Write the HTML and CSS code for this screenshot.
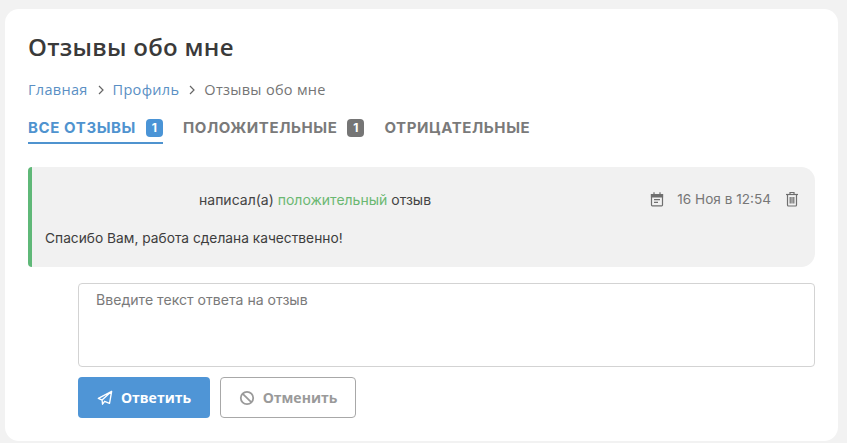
FILE: index.html
```html
<!DOCTYPE html>
<html lang="en">
<head>
  <meta charset="UTF-8" />
  <title>Отзывы обо мне</title>
  <link rel="stylesheet" href="styles.css">
</head>
<body>
  <div class="card">
    <h1 class="title">Отзывы обо мне</h1>

    <div class="crumbs">
      <a href="#">Главная</a>
      <svg class="crumb-arrow" viewBox="0 0 8 10"><path d="M2 1l4 4-4 4" /></svg>
      <a href="#">Профиль</a>
      <svg class="crumb-arrow" viewBox="0 0 8 10"><path d="M2 1l4 4-4 4" /></svg>
      <span>Отзывы обо мне</span>
    </div>

    <div class="tabs">
      <a class="tab active" href="#">ВСЕ ОТЗЫВЫ <span class="count">1</span></a>
      <a class="tab" href="#">ПОЛОЖИТЕЛЬНЫЕ <span class="count">1</span></a>
      <a class="tab" href="#">ОТРИЦАТЕЛЬНЫЕ</a>
    </div>

    <div class="review">
      <div class="review-head">
        <div class="review-who">написал(а) <span class="good">положительный</span> отзыв</div>
        <div class="review-meta">
          <svg class="icon date-icon" viewBox="0 0 14 16">
            <path d="M1.5 3.5h11v10.5a.8.8 0 0 1-.8.8H2.3a.8.8 0 0 1-.8-.8z" />
            <path class="date-top" d="M1.5 3.5h11v2.5h-11z" />
            <path d="M4 1.2v3M10 1.2v3" />
            <path d="M4 8.6h6M4 11.4h4" />
          </svg>
          <span class="date">16 Ноя в 12:54</span>
          <svg class="icon trash-icon" viewBox="0 0 14 16">
            <path d="M1 3.5h12" />
            <path d="M5 3.2V1.5h4v1.7" />
            <path d="M2.5 3.5v10.6c0 .5.4.9.9.9h7.2c.5 0 .9-.4.9-.9V3.5" />
            <path d="M5.2 6v6.5M7 6v6.5M8.8 6v6.5" />
          </svg>
        </div>
      </div>
      <p class="review-text">Спасибо Вам, работа сделана качественно!</p>
    </div>

    <form class="answer">
      <textarea class="answer-input" placeholder="Введите текст ответа на отзыв"></textarea>
      <div class="answer-btns">
        <button class="btn btn-send" type="button">
          <svg class="btn-icon" viewBox="0 0 18 18"><path d="M16.5 1.5L1.5 9.5l4.2 1.8L16.5 1.5zM16.5 1.5l-2.4 13.6-5.5-2.4-2.4 3.3-.5-5.2" /></svg>
          Ответить
        </button>
        <button class="btn btn-cancel" type="button">
          <svg class="btn-icon" viewBox="0 0 18 18"><circle cx="9" cy="9" r="7" /><path d="M4 4l10 10" /></svg>
          Отменить
        </button>
      </div>
    </form>
  </div>
</body>
</html>
```

FILE: styles.css
```css
html, body {
  height: 100%;
}
body {
  margin: 0;
  padding: 9px 9px 2px 5px;
  box-sizing: border-box;
  background: #f2f2f2;
  font-family: "Inter", "Liberation Sans", sans-serif;
  color: #333;
  overflow: hidden;
}
.card {
  background: #fff;
  border-radius: 14px;
  height: 100%;
  box-sizing: border-box;
  padding: 23px 23px 0;
}
.title {
  margin: 0;
  font-family: "Open Sans", sans-serif;
  font-size: 24px;
  line-height: 30px;
  font-weight: 600;
  letter-spacing: .3px;
  color: #3a3a3a;
}
.crumbs {
  display: flex;
  align-items: center;
  margin-top: 18px;
  font-family: "Open Sans", sans-serif;
  font-size: 14.5px;
  letter-spacing: .3px;
  line-height: 20px;
  color: #757575;
}
.crumbs a {
  color: #5a8fc4;
  text-decoration: none;
}
.crumb-arrow {
  width: 8px;
  height: 10px;
  margin: 0 8px 0 9px;
  fill: none;
  stroke: #666;
  stroke-width: 1.2;
}
.tabs {
  display: flex;
  gap: 20px;
  margin-top: 16px;
}
.tab {
  display: flex;
  align-items: center;
  gap: 10px;
  height: 28px;
  padding-bottom: 5px;
  box-sizing: border-box;
  font-size: 15px;
  font-weight: 700;
  color: #7a7a7a;
  text-decoration: none;
  letter-spacing: .6px;
}
.tab.active {
  color: #4f93cf;
  border-bottom: 2px solid #4f93cf;
  padding-bottom: 3px;
}
.count {
  width: 17px;
  height: 18px;
  line-height: 18px;
  border-radius: 4px;
  background: #757575;
  color: #fff;
  font-size: 12px;
  text-align: center;
  letter-spacing: 0;
}
.active .count {
  background: #4a94d6;
}
.review {
  margin-top: 23px;
  height: 100px;
  box-sizing: border-box;
  padding: 21px 16px 0 13px;
  background: #f1f1f1;
  border-left: 4px solid #5fb878;
  border-radius: 4px 14px 14px 4px;
}
.review-head {
  display: flex;
  align-items: center;
  justify-content: space-between;
  height: 22px;
}
.review-who {
  margin-left: 154px;
  font-size: 14px;
  color: #444;
}
.good {
  color: #6bb872;
}
.review-meta {
  display: flex;
  align-items: center;
  color: #777;
  font-size: 13.6px;
}
.icon {
  width: 14px;
  height: 16px;
  fill: none;
  stroke: #6f6f6f;
  stroke-width: 1.2;
}
.date-top {
  fill: #6f6f6f;
}
.date {
  margin: 0 14px 0 13px;
}
.review-text {
  margin: 18px 0 0;
  font-size: 13.75px;
  line-height: 20px;
  color: #3d3d3d;
}
.answer {
  margin: 16px 0 0 50px;
}
.answer-input {
  display: block;
  width: 100%;
  height: 84px;
  box-sizing: border-box;
  padding: 7px 17px;
  border: 1px solid #d3d3d3;
  border-radius: 4px;
  resize: none;
  font-family: inherit;
  font-size: 14.1px;
  line-height: 18px;
  background: #fff;
}
.answer-input::placeholder {
  color: #7a7a7a;
  opacity: 1;
}
.answer-btns {
  display: flex;
  gap: 10px;
  margin-top: 10px;
}
.btn {
  display: flex;
  align-items: center;
  justify-content: center;
  gap: 8px;
  height: 41px;
  box-sizing: border-box;
  border-radius: 4px;
  font-family: "Open Sans", sans-serif;
  font-size: 14px;
  font-weight: 700;
}
.btn-icon {
  width: 16px;
  height: 16px;
  fill: none;
  stroke-width: 1.5;
  stroke-linejoin: round;
}
.btn-send {
  width: 132px;
  background: #4f95d6;
  border: 0;
  color: #fff;
}
.btn-send .btn-icon {
  stroke: #fff;
}
.btn-cancel {
  width: 136px;
  background: #fff;
  border: 1px solid #a8a8a8;
  color: #9a9a9a;
}
.btn-cancel .btn-icon {
  stroke: #9a9a9a;
  stroke-width: 2;
}
```
